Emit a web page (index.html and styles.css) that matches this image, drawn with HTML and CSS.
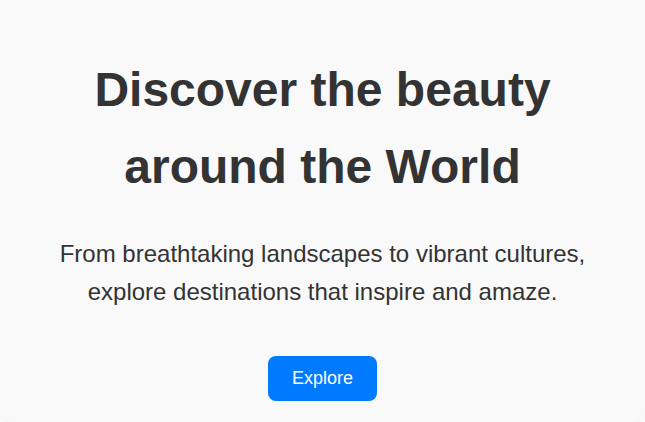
FILE: index.html
```html
<!DOCTYPE html>
<html lang="en">
<head>
<meta charset="utf-8">
<title>Discover</title>
<link rel="stylesheet" href="styles.css">
</head>
<body>
<section class="hero">
  <h1 class="hero-title">Discover the beauty around the World</h1>
  <p class="hero-text">From breathtaking landscapes to vibrant cultures, explore destinations that inspire and amaze.</p>
  <button class="hero-btn" type="button">Explore</button>
</section>
</body>
</html>
```

FILE: styles.css
```css
html, body {
  margin: 0;
  padding: 0;
  background: #ffffff;
}
body {
  font-family: "Liberation Sans", Arial, sans-serif;
  color: #333333;
}
.hero {
  box-sizing: border-box;
  height: 422px;
  background: #f9f9f9;
  border-radius: 0 0 10px 10px;
  box-shadow: 0 2px 6px rgba(0, 0, 0, 0.06);
  display: flex;
  flex-direction: column;
  align-items: center;
  text-align: center;
  padding: 52px 40px 0;
}
.hero-title {
  margin: 0;
  max-width: 500px;
  font-size: 48px;
  line-height: 1.6;
  font-weight: 700;
  color: #333333;
}
.hero-text {
  margin: 29px 0 0;
  max-width: 560px;
  font-size: 24px;
  line-height: 1.6;
  color: #333333;
}
.hero-btn {
  margin-top: 45px;
  padding: 12px 24px;
  font-family: inherit;
  font-size: 18px;
  color: #ffffff;
  background: #007bff;
  border: none;
  border-radius: 8px;
  cursor: pointer;
}
```
